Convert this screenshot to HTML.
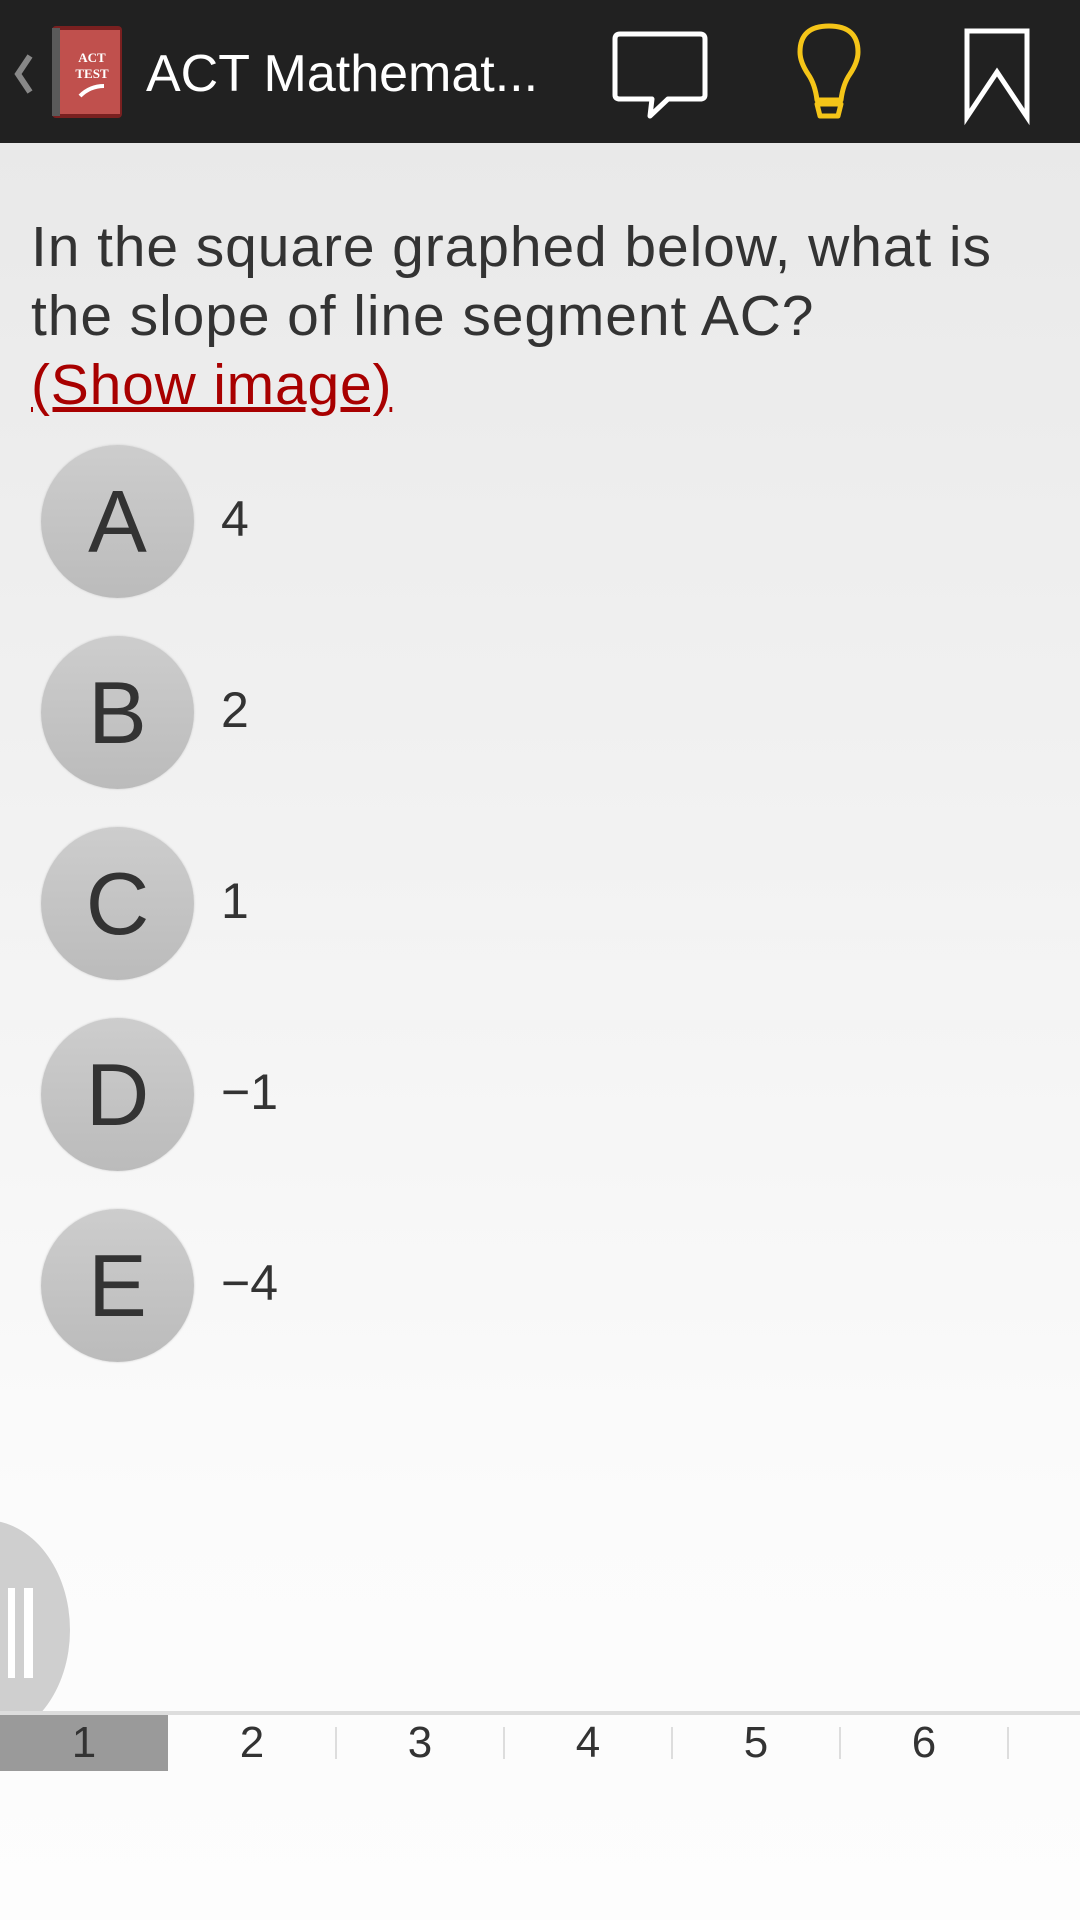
<!DOCTYPE html>
<html><head><meta charset="utf-8"><style>
*{margin:0;padding:0;box-sizing:border-box}
body{width:1080px;height:1920px;overflow:hidden;position:relative;font-family:"Liberation Sans",sans-serif;background:linear-gradient(#e9e9e9 143px,#f0f0f0 700px,#fbfbfb 1500px,#fdfdfd);}
.hdr{position:absolute;left:0;top:0;width:1080px;height:143px;background:#212121}
.title{position:absolute;left:146px;top:44px;color:#fff;font-size:52px;white-space:nowrap}
.q{position:absolute;left:31px;top:213px;font-size:57px;line-height:69px;color:#333;width:1045px;letter-spacing:0.9px;white-space:nowrap}
.q a{color:#a80000;text-decoration:underline;letter-spacing:0.8px}
.c{position:absolute;left:41px;width:153px;height:153px;border-radius:50%;background:linear-gradient(#cdcdcd,#bbbbbb);color:#333;font-size:88px;text-align:center;line-height:153px;box-shadow:0 0 2px #ccc}
.ans{position:absolute;left:221px;font-size:50px;color:#333}
.tabs{position:absolute;left:0;top:1711px;width:1080px;height:4px;background:#ddd}
.tab{position:absolute;top:1715px;width:168px;height:56px;text-align:center;font-size:44px;line-height:56px;color:#333}
.sep{position:absolute;top:1727px;width:2px;height:32px;background:#ddd}
</style></head><body>
<div class="hdr">
<svg width="1080" height="143" style="position:absolute;left:0;top:0">
<path d="M30 56 L18 74 L30 92" stroke="#888" stroke-width="6" fill="none"/>
<rect x="52" y="26" width="70" height="92" rx="4" fill="#7a2020"/>
<rect x="56" y="30" width="64" height="84" fill="#c0504d"/>
<rect x="52" y="28" width="8" height="88" fill="#5a5a5a"/>
<text x="92" y="62" fill="#fff" font-family="Liberation Serif" font-size="13" font-weight="bold" text-anchor="middle">ACT</text>
<text x="92" y="78" fill="#fff" font-family="Liberation Serif" font-size="13" font-weight="bold" text-anchor="middle">TEST</text>
<path d="M80 96 Q90 86 104 86" stroke="#fff" stroke-width="4" fill="none"/>
<path d="M620 34 H700 Q705 34 705 39 V95 Q705 99 700 99 H668 L650 116 L652 99 H620 Q615 99 615 95 V39 Q615 34 620 34Z" stroke="#fff" stroke-width="5" fill="none" stroke-linejoin="round"/>
<path d="M817 100 Q815 84 808 74 Q800 62 800 52 Q800 26 829 26 Q858 26 858 52 Q858 62 850 74 Q843 84 841 100 Z M817 104 H841 L838 116 H820 Z" stroke="#f5c518" stroke-width="5" fill="none" stroke-linejoin="round"/>
<path d="M967 31 H1027 V117 L997 72 L967 117 Z" stroke="#fff" stroke-width="5" fill="none" stroke-linejoin="miter"/>
</svg>
<div class="title">ACT Mathemat...</div>
</div>
<div class="q">In the square graphed below, what is<br>the slope of line segment AC?<br><a>(Show image)</a></div>
<div class="c" style="top:445px">A</div><div class="ans" style="top:490px">4</div>
<div class="c" style="top:636px">B</div><div class="ans" style="top:681px">2</div>
<div class="c" style="top:827px">C</div><div class="ans" style="top:872px">1</div>
<div class="c" style="top:1018px">D</div><div class="ans" style="top:1063px">−1</div>
<div class="c" style="top:1209px">E</div><div class="ans" style="top:1254px">−4</div>
<div style="position:absolute;left:-100px;top:1520px;width:170px;height:220px;border-radius:50%;background:#cfcfcf"></div>
<div style="position:absolute;left:8px;top:1588px;width:7px;height:90px;background:#fff"></div>
<div style="position:absolute;left:24px;top:1588px;width:9px;height:90px;background:#fff"></div>
<div class="tabs"></div>
<div class="tab" style="left:0;background:#9a9a9a">1</div>
<div class="tab" style="left:168px">2</div><div class="sep" style="left:335px"></div>
<div class="tab" style="left:336px">3</div><div class="sep" style="left:503px"></div>
<div class="tab" style="left:504px">4</div><div class="sep" style="left:671px"></div>
<div class="tab" style="left:672px">5</div><div class="sep" style="left:839px"></div>
<div class="tab" style="left:840px">6</div><div class="sep" style="left:1007px"></div>
</body></html>
